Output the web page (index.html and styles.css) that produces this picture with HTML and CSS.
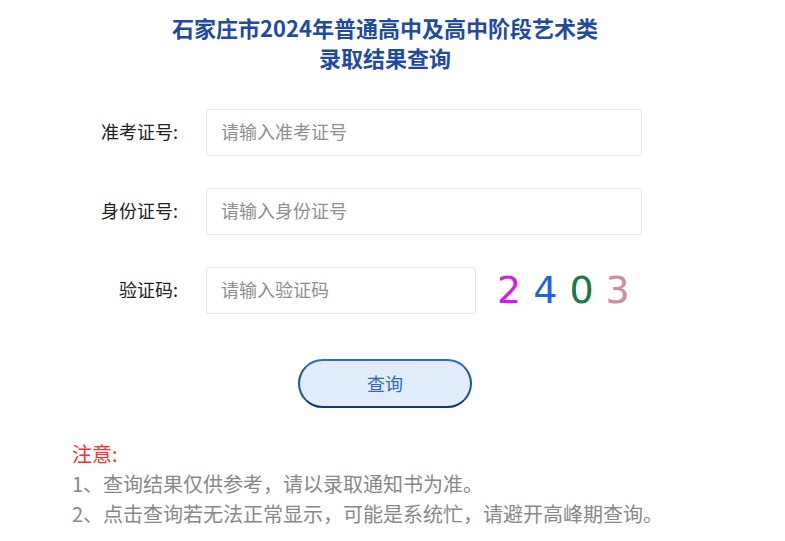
FILE: index.html
```html
<!DOCTYPE html>
<html lang="zh-CN">
<head>
<meta charset="UTF-8" />
<meta name="viewport" content="width=device-width, initial-scale=1.0"/>
<title>录取结果查询</title>
<link rel="stylesheet" href="styles.css">
</head>
<body>
<main class="page">
  <h1 class="title">石家庄市2024年普通高中及高中阶段艺术类<br>录取结果查询</h1>

  <form class="query-form" onsubmit="return false;">
    <div class="form-row">
      <label class="form-label" for="examNo">准考证号:</label>
      <input class="form-input" type="text" id="examNo" placeholder="请输入准考证号" />
    </div>
    <div class="form-row">
      <label class="form-label" for="idNo">身份证号:</label>
      <input class="form-input" type="text" id="idNo" placeholder="请输入身份证号" />
    </div>
    <div class="form-row">
      <label class="form-label" for="code">验证码:</label>
      <input class="form-input form-input-short" type="text" id="code" placeholder="请输入验证码" />
      <div class="captcha">
        <span class="c1">2</span>
        <span class="c2">4</span>
        <span class="c3">0</span>
        <span class="c4">3</span>
      </div>
    </div>
    <button class="submit-btn" type="submit">查询</button>
  </form>

  <div class="notes">
    <p class="notes-title">注意:</p>
    <p>1、查询结果仅供参考，请以录取通知书为准。</p>
    <p>2、点击查询若无法正常显示，可能是系统忙，请避开高峰期查询。</p>
  </div>
</main>
</body>
</html>
```

FILE: styles.css
```css
body {
  width: 770px;
  margin: 0;
  padding: 0;
  background: #ffffff;
  color: #333333;
  font-family: "Noto Sans CJK SC", "Noto Sans", sans-serif;
}

.page {
  width: 626px;
  margin: 0 auto;
}

.title {
  margin: 12px 0 0;
  font-size: 22px;
  line-height: 30px;
  font-weight: bold;
  text-align: center;
  color: #1f4b9f;
}

.query-form {
  margin-top: 37px;
}

.form-row {
  display: flex;
  align-items: center;
  height: 47px;
  margin-bottom: 32px;
}

.form-label {
  width: 106px;
  margin-right: 28px;
  padding-bottom: 3px;
  text-align: right;
  font-size: 18px;
  color: #222222;
}

.form-input {
  width: 436px;
  height: 47px;
  box-sizing: border-box;
  border: 1px solid #e6e6e6;
  border-radius: 3px;
  padding: 0 14px 3px;
  font-family: inherit;
  font-size: 18px;
  color: #333333;
  outline: none;
}

.form-input::placeholder {
  color: #8f8f8f;
}

.form-input-short {
  width: 270px;
}

.captcha {
  display: flex;
  gap: 12px;
  margin-left: 21px;
  font-family: "DejaVu Sans", sans-serif;
  font-size: 38px;
  line-height: 47px;
}

.c1 { color: #d418f0; }
.c2 { color: #1d63df; }
.c3 { color: #17794a; }
.c4 { color: #c78fa6; }

.submit-btn {
  display: block;
  width: 174px;
  height: 49px;
  margin: 45px auto 0;
  padding-bottom: 3px;
  border: 2px solid;
  border-color: #2a6fc6 #1b55a0 #0f3b74 #1b55a0;
  border-radius: 25px;
  background: #e1ecfd;
  color: #2f69b8;
  font-family: inherit;
  font-size: 18px;
  cursor: pointer;
}

.notes {
  margin-top: 31px;
  font-size: 20px;
  line-height: 30px;
  color: #888888;
}

.notes p {
  margin: 0;
}

.notes .notes-title {
  color: #ff2d2d;
}
```
